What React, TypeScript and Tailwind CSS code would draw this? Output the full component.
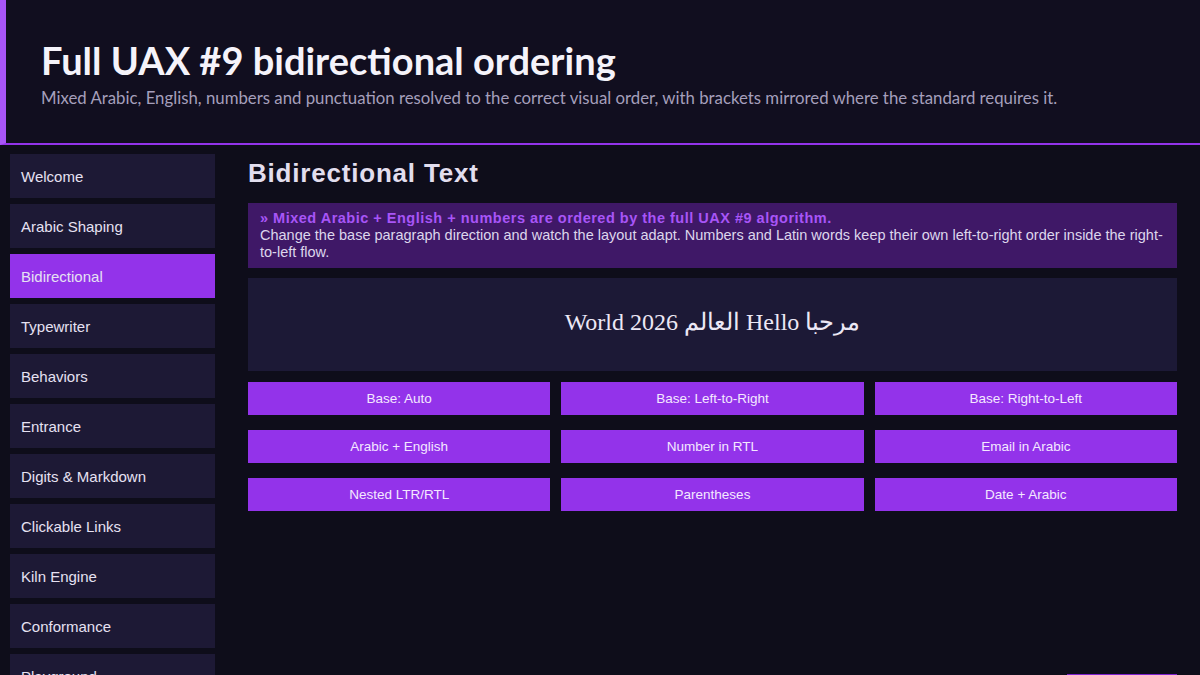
import React, { useState } from 'react';

const navItems = [
  'Welcome',
  'Arabic Shaping',
  'Bidirectional',
  'Typewriter',
  'Behaviors',
  'Entrance',
  'Digits & Markdown',
  'Clickable Links',
  'Kiln Engine',
  'Conformance',
  'Playground',
];

const actions = [
  'Base: Auto',
  'Base: Left-to-Right',
  'Base: Right-to-Left',
  'Arabic + English',
  'Number in RTL',
  'Email in Arabic',
  'Nested LTR/RTL',
  'Parentheses',
  'Date + Arabic',
];

const App: React.FC = () => {
  const [active, setActive] = useState('Bidirectional');

  return (
    <div className="h-[675px] overflow-hidden bg-[#0e0d1a] font-['Liberation_Sans',Arial,sans-serif]">
      <header className="h-[145px] border-l-[6px] border-b-2 border-l-[#a855f7] border-b-[#9333ea] bg-[#110e1f] pl-[35px] pt-[37px]">
        <h1 className="font-['Lato','Open_Sans',sans-serif] text-[38px] font-bold leading-[47px] text-[#f5f3fa]">
          Full UAX #9 bidirectional ordering
        </h1>
        <p className="mt-[1px] font-['Lato','Open_Sans',sans-serif] text-[16.8px] text-[#a59fbb]">
          Mixed Arabic, English, numbers and punctuation resolved to the correct visual order, with brackets mirrored where the standard requires it.
        </p>
      </header>

      <div className="flex">
        <nav className="ml-[10px] mt-[9px] flex w-[205px] shrink-0 flex-col gap-[6px]">
          {navItems.map((item) => (
            <button
              key={item}
              onClick={() => setActive(item)}
              className={`h-[44px] shrink-0 px-[11px] pt-[2px] text-left text-[15px] text-[#e6e1f2] ${
                active === item ? 'bg-[#9333ea]' : 'bg-[#1d1935]'
              }`}
            >
              {item}
            </button>
          ))}
        </nav>

        <main className="ml-[33px] mr-[23px] flex-1">
          <h2 className="mt-[12px] text-[26px] font-bold leading-[32px] tracking-[0.8px] text-[#e2deee]">
            Bidirectional Text
          </h2>

          <div className="mt-[14px] bg-[#3f1867] px-[12px] pt-[7px] pb-[7px] text-[14.5px] leading-[17px]">
            <div className="font-bold tracking-[0.5px] text-[#a855f7]">
              » Mixed Arabic + English + numbers are ordered by the full UAX #9 algorithm.
            </div>
            <div className="text-[#ddd6ec]">
              Change the base paragraph direction and watch the layout adapt. Numbers and Latin words keep their own left-to-right order inside the right-to-left flow.
            </div>
          </div>

          <div className="mt-[10px] flex h-[93px] items-center justify-center bg-[#1c1936] pb-[6px]">
            <span dir="rtl" className="font-['Liberation_Serif','DejaVu_Serif',serif] text-[24px] text-[#ece8f5]">
              مرحبا Hello العالم 2026 World
            </span>
          </div>

          <div className="mt-[11px] grid grid-cols-3 gap-x-[11px] gap-y-[15px]">
            {actions.map((a) => (
              <button key={a} className="h-[33px] bg-[#9333ea] pt-[1px] text-[13.5px] text-[#f3e8ff]">
                {a}
              </button>
            ))}
          </div>

          <div className="mt-[163px] flex justify-end">
            <div className="h-[30px] w-[110px] bg-[#7e22ce]" />
          </div>
        </main>
      </div>
    </div>
  );
};

export default App;
